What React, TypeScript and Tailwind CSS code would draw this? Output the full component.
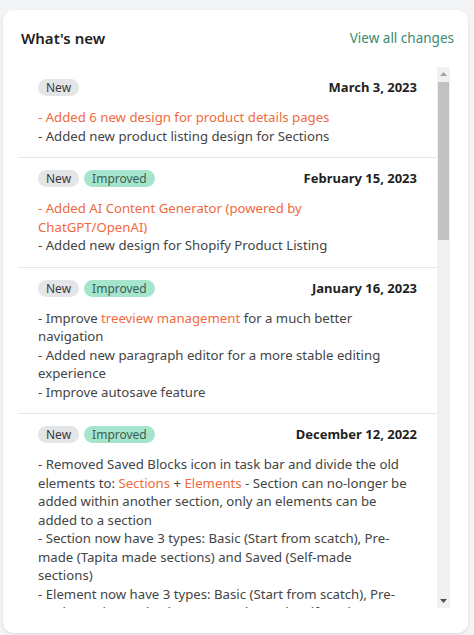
import React from "react";

type Part = string | { o: string };

// each row is one visual line, as it wraps in the panel
const ENTRIES: { date: string; tags: string[]; rows: Part[][] }[] = [
  {
    date: "March 3, 2023",
    tags: ["New"],
    rows: [
      [{ o: "- Added 6 new design for product details pages" }],
      ["- Added new product listing design for Sections"],
    ],
  },
  {
    date: "February 15, 2023",
    tags: ["New", "Improved"],
    rows: [
      [{ o: "- Added AI Content Generator (powered by" }],
      [{ o: "ChatGPT/OpenAI)" }],
      ["- Added new design for Shopify Product Listing"],
    ],
  },
  {
    date: "January 16, 2023",
    tags: ["New", "Improved"],
    rows: [
      ["- Improve ", { o: "treeview management" }, " for a much better"],
      ["navigation"],
      ["- Added new paragraph editor for a more stable editing"],
      ["experience"],
      ["- Improve autosave feature"],
    ],
  },
  {
    date: "December 12, 2022",
    tags: ["New", "Improved"],
    rows: [
      ["- Removed Saved Blocks icon in task bar and divide the old"],
      ["elements to: ", { o: "Sections" }, " + ", { o: "Elements" }, " - Section can no-longer be"],
      ["added within another section, only an elements can be"],
      ["added to a section"],
      ["- Section now have 3 types: Basic (Start from scatch), Pre-"],
      ["made (Tapita made sections) and Saved (Self-made"],
      ["sections)"],
      ["- Element now have 3 types: Basic (Start from scatch), Pre-"],
      ["made (Tapita made elements) and Saved (Self-made"],
      ["elements)"],
      ["- Improve the performance of the editor"],
    ],
  },
];

function Tag({ name }: { name: string }) {
  const cls =
    name === "New"
      ? "bg-[#e4e5e7] text-[#3a3a3a]"
      : "bg-[#a5e4cd] text-[#3c5e52]";
  return (
    <span className={`rounded-full px-[8px] text-[12px] leading-[17px] ${cls}`}>
      {name}
    </span>
  );
}

// classic scrollbar, drawn since the headless page hides native ones
function ScrollBar() {
  return (
    <div className="flex w-[13px] shrink-0 flex-col bg-[#f1f1f1]">
      <div className="flex h-[14px] items-center justify-center">
        <svg width="7" height="4" viewBox="0 0 7 4">
          <path d="M3.5 0 L7 4 L0 4 Z" fill="#a3a3a3" />
        </svg>
      </div>
      <div className="mx-[1px] mt-[1px] h-[158px] bg-[#c1c1c1]" />
      <div className="flex-1" />
      <div className="flex h-[14px] items-center justify-center">
        <svg width="7" height="4" viewBox="0 0 7 4">
          <path d="M0 0 L7 0 L3.5 4 Z" fill="#505050" />
        </svg>
      </div>
    </div>
  );
}

export default function App() {
  return (
    <div
      className="min-h-[635px] bg-[#f3f4f6] pt-[10px] pl-[3px] pr-[6px] pb-[2px]"
      style={{ fontFamily: "'Noto Sans', 'Liberation Sans', sans-serif" }}
    >
      <div className="rounded-[10px] bg-white pl-[15px] pr-[14px] pt-[17px] pb-[25px] shadow-[0_1px_3px_rgba(0,0,0,0.12)]">
        <div className="flex items-center justify-between pl-[3px]">
          <h2 className="text-[15px] font-semibold leading-[22px] text-[#1f1f1f]">What's new</h2>
          <a className="text-[13.5px] leading-[22px] text-[#3d8a6e]">View all changes</a>
        </div>
        <div className="mt-[18px] mr-[4px] flex h-[541px]">
          <div className="min-w-0 flex-1 overflow-hidden">
            {ENTRIES.map((e, i) => (
              <div
                key={e.date}
                className={`px-5 pt-3 pb-3 ${i > 0 ? "border-t border-[#e6e7e9]" : ""}`}
              >
                <div className="flex items-center justify-between">
                  <div className="flex gap-[5px]">
                    {e.tags.map((t) => (
                      <Tag key={t} name={t} />
                    ))}
                  </div>
                  <span className="text-[13px] font-bold leading-[17px] text-[#1f1f1f]">{e.date}</span>
                </div>
                <div className="mt-3 text-[13.2px] leading-[18.5px] text-[#444]">
                  {e.rows.map((l, j) => (
                    <p key={j} className="whitespace-nowrap">
                      {l.map((p, k) =>
                        typeof p === "string" ? (
                          <span key={k}>{p}</span>
                        ) : (
                          <span key={k} className="text-[#f06a3e]">{p.o}</span>
                        )
                      )}
                    </p>
                  ))}
                </div>
              </div>
            ))}
          </div>
          <ScrollBar />
        </div>
      </div>
    </div>
  );
}
